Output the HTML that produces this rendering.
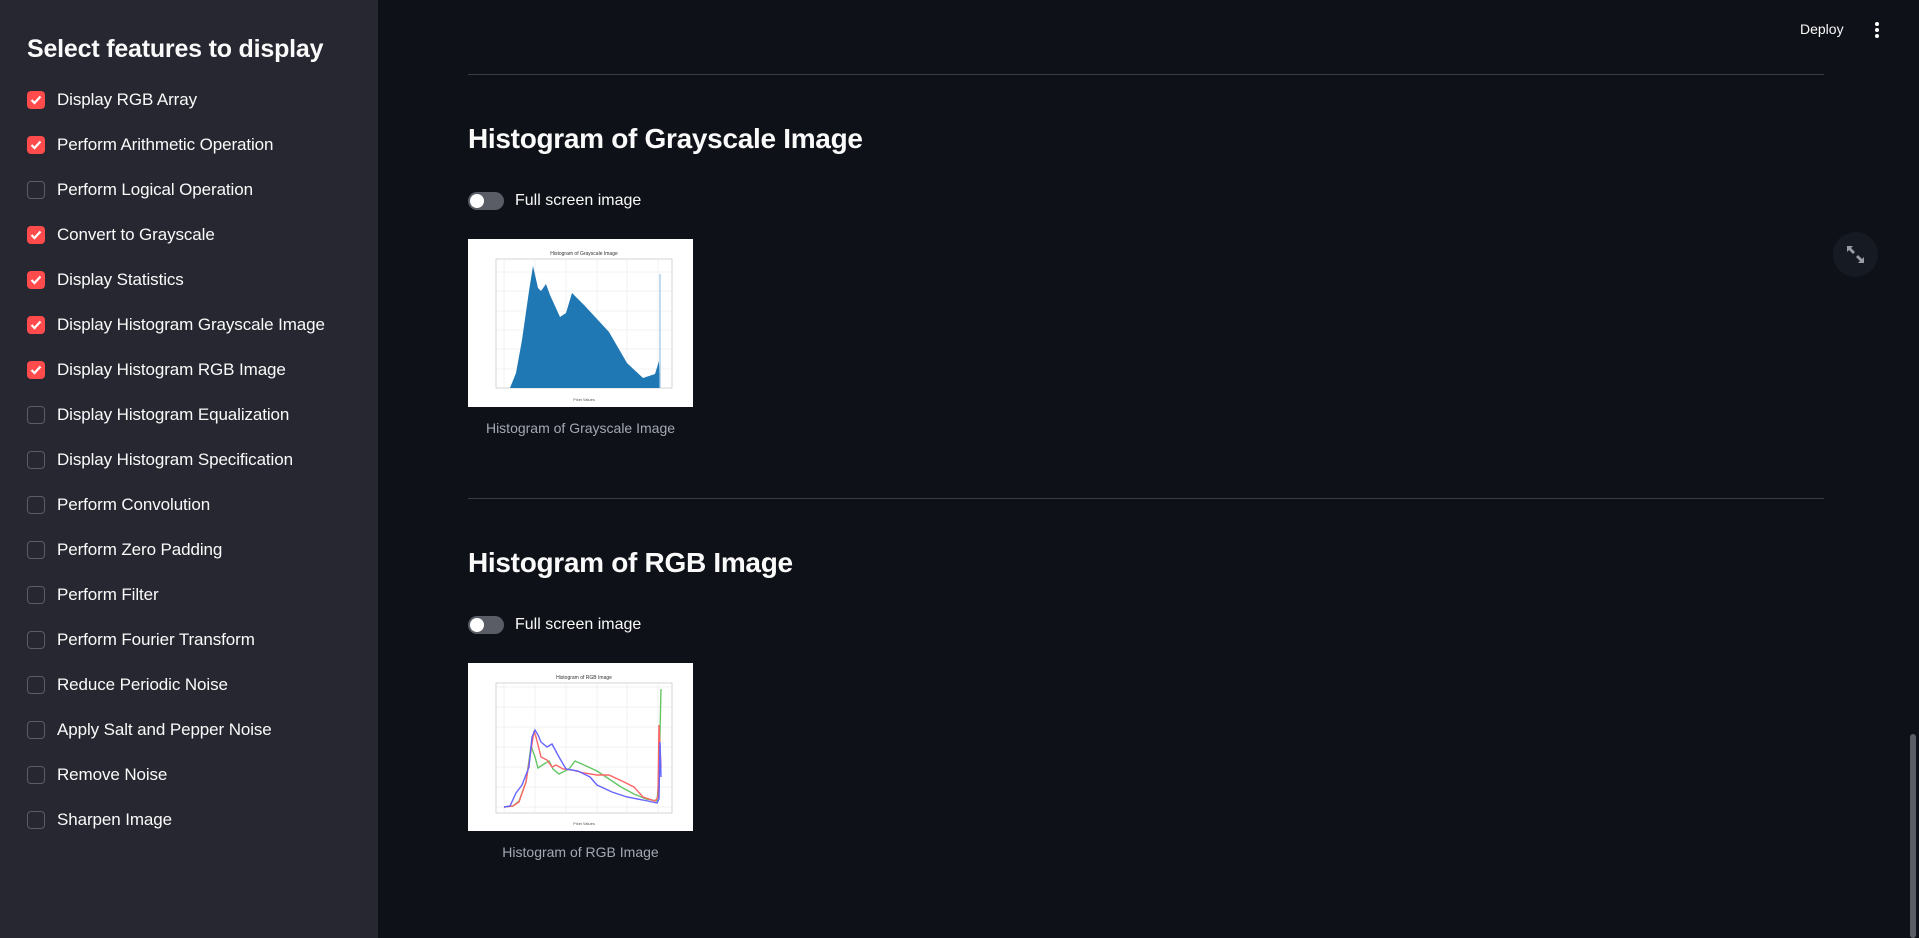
<!DOCTYPE html>
<html><head><meta charset="utf-8"><style>
*{margin:0;padding:0;box-sizing:border-box}
body{width:1919px;height:938px;background:#0e1117;font-family:"Liberation Sans",sans-serif;color:#fafafa;position:relative;overflow:hidden}
.sb{position:absolute;left:0;top:0;width:378px;height:938px;background:#262730}
.sb h2{position:absolute;left:27px;top:35px;font-size:25px;font-weight:bold;letter-spacing:-0.2px}
.row{position:absolute;left:27px;height:20px;display:flex;align-items:center;font-size:17px;letter-spacing:-0.1px}
.cb{width:18px;height:18px;border-radius:4px;margin-right:12px;flex:none}
.on{background:#ff4b4b;display:flex;align-items:center;justify-content:center}
.off{border:1.5px solid #5a5c66;background:#262730}
.hr{position:absolute;left:468px;width:1356px;height:1px;background:#3a3d45}
.h{position:absolute;left:468px;font-size:28px;font-weight:bold;letter-spacing:-0.3px}
.tg{position:absolute;left:468px;display:flex;align-items:center;font-size:16px}
.sw{width:36px;height:18px;border-radius:9px;background:#5a5c66;position:relative;margin-right:11px}
.sw:after{content:"";position:absolute;left:2px;top:2px;width:14px;height:14px;border-radius:50%;background:#fff}
.img{position:absolute;left:468px;width:225px;height:168px;background:#fff}
.cap{position:absolute;left:468px;width:225px;text-align:center;font-size:14px;color:#a3a8b4}
</style></head><body>
<div class="sb">
<h2>Select features to display</h2>
<div class="row" style="top:90px"><div class="cb on"><svg width="12" height="10" viewBox="0 0 12 10"><path d="M1.5 5l3 3 6-6.5" stroke="#fff" stroke-width="2.2" fill="none"/></svg></div>Display RGB Array</div>
<div class="row" style="top:135px"><div class="cb on"><svg width="12" height="10" viewBox="0 0 12 10"><path d="M1.5 5l3 3 6-6.5" stroke="#fff" stroke-width="2.2" fill="none"/></svg></div>Perform Arithmetic Operation</div>
<div class="row" style="top:180px"><div class="cb off"></div>Perform Logical Operation</div>
<div class="row" style="top:225px"><div class="cb on"><svg width="12" height="10" viewBox="0 0 12 10"><path d="M1.5 5l3 3 6-6.5" stroke="#fff" stroke-width="2.2" fill="none"/></svg></div>Convert to Grayscale</div>
<div class="row" style="top:270px"><div class="cb on"><svg width="12" height="10" viewBox="0 0 12 10"><path d="M1.5 5l3 3 6-6.5" stroke="#fff" stroke-width="2.2" fill="none"/></svg></div>Display Statistics</div>
<div class="row" style="top:315px"><div class="cb on"><svg width="12" height="10" viewBox="0 0 12 10"><path d="M1.5 5l3 3 6-6.5" stroke="#fff" stroke-width="2.2" fill="none"/></svg></div>Display Histogram Grayscale Image</div>
<div class="row" style="top:360px"><div class="cb on"><svg width="12" height="10" viewBox="0 0 12 10"><path d="M1.5 5l3 3 6-6.5" stroke="#fff" stroke-width="2.2" fill="none"/></svg></div>Display Histogram RGB Image</div>
<div class="row" style="top:405px"><div class="cb off"></div>Display Histogram Equalization</div>
<div class="row" style="top:450px"><div class="cb off"></div>Display Histogram Specification</div>
<div class="row" style="top:495px"><div class="cb off"></div>Perform Convolution</div>
<div class="row" style="top:540px"><div class="cb off"></div>Perform Zero Padding</div>
<div class="row" style="top:585px"><div class="cb off"></div>Perform Filter</div>
<div class="row" style="top:630px"><div class="cb off"></div>Perform Fourier Transform</div>
<div class="row" style="top:675px"><div class="cb off"></div>Reduce Periodic Noise</div>
<div class="row" style="top:720px"><div class="cb off"></div>Apply Salt and Pepper Noise</div>
<div class="row" style="top:765px"><div class="cb off"></div>Remove Noise</div>
<div class="row" style="top:810px"><div class="cb off"></div>Sharpen Image</div>
</div>

<div style="position:absolute;left:1800px;top:21px;font-size:14px">Deploy</div>
<svg style="position:absolute;left:1873px;top:20px" width="8" height="20" viewBox="0 0 8 20"><circle cx="4" cy="4" r="2" fill="#fff"/><circle cx="4" cy="10" r="2" fill="#fff"/><circle cx="4" cy="16" r="2" fill="#fff"/></svg>
<div style="position:absolute;left:1833px;top:232px;width:45px;height:45px;border-radius:50%;background:#161a22"></div>
<svg style="position:absolute;left:1846px;top:245px" width="19" height="19" viewBox="0 0 19 19"><path d="M1 1h6l-2 2 4 4-2 2-4-4-2 2zM18 18h-6l2-2-4-4 2-2 4 4 2-2z" fill="#9a9ca4"/></svg>
<div style="position:absolute;left:1910px;top:734px;width:6px;height:204px;background:#5a5c66;border-radius:3px"></div>

<div class="hr" style="top:74px"></div>
<div class="h" style="top:123px">Histogram of Grayscale Image</div>
<div class="tg" style="top:192px"><div class="sw"></div>Full screen image</div>
<div class="img" style="top:239px">
<svg width="225" height="168" viewBox="0 0 225 168">
<text x="116" y="16" font-size="5" text-anchor="middle" fill="#333">Histogram of Grayscale Image</text>
<rect x="28" y="20" width="176" height="129" fill="none" stroke="#bbb" stroke-width="0.6"/>
<g stroke="#e6e6e6" stroke-width="0.5"><path d="M36 20v129M67 20v129M98 20v129M129 20v129M159 20v129M190 20v129M28 33h176M28 52h176M28 72h176M28 91h176M28 110h176M28 130h176"/></g>
<path d="M42 149L48 134L54 101L61 52L65 27L70 49L73 52L78 45L82 56L92 78L98 74L104 54L116 66L129 80L141 93L159 124L175 139L187 135L191 122L192 149Z" fill="#1f77b4"/>
<path d="M192 149V35" stroke="#9ec6e6" stroke-width="1.3"/>
<text x="116" y="162" font-size="4" text-anchor="middle" fill="#555">Pixel Values</text>
</svg></div>
<div class="cap" style="top:420px">Histogram of Grayscale Image</div>

<div class="hr" style="top:498px"></div>
<div class="h" style="top:547px">Histogram of RGB Image</div>
<div class="tg" style="top:616px"><div class="sw"></div>Full screen image</div>
<div class="img" style="top:663px">
<svg width="225" height="168" viewBox="0 0 225 168">
<text x="116" y="16" font-size="5" text-anchor="middle" fill="#333">Histogram of RGB Image</text>
<rect x="28" y="20" width="176" height="130" fill="none" stroke="#bbb" stroke-width="0.6"/>
<g stroke="#e6e6e6" stroke-width="0.5"><path d="M36 20v130M67 20v130M98 20v130M129 20v130M159 20v130M190 20v130M28 24h176M28 44h176M28 64h176M28 84h176M28 104h176M28 124h176M28 144h176"/></g>
<g fill="none" stroke-width="1.4" opacity="0.6">
<path d="M36 144L45 143L51 138L58 119L63 83L67 94L70 105L76 101L81 98L85 106L91 111L101 106L107 98L116 102L129 108L141 116L153 124L166 131L178 136L189 138L191 114L193 26" stroke="#00a000"/>
<path d="M36 144L45 143L51 139L58 119L62 94L66 68L68 74L73 94L79 97L84 104L88 102L95 106L104 107L116 110L129 112L141 112L156 119L166 124L175 134L187 138L190 134L191 62L193 104" stroke="#ff0000"/>
<path d="M36 144L42 143L48 130L54 122L61 104L64 74L67 67L70 72L73 79L79 84L84 81L91 94L98 106L110 108L122 114L129 122L144 129L159 134L175 137L189 140L191 136L192 79L193 114" stroke="#0000ff"/>
</g>
<text x="116" y="162" font-size="4" text-anchor="middle" fill="#555">Pixel Values</text>
</svg></div>
<div class="cap" style="top:844px">Histogram of RGB Image</div>
</body></html>
